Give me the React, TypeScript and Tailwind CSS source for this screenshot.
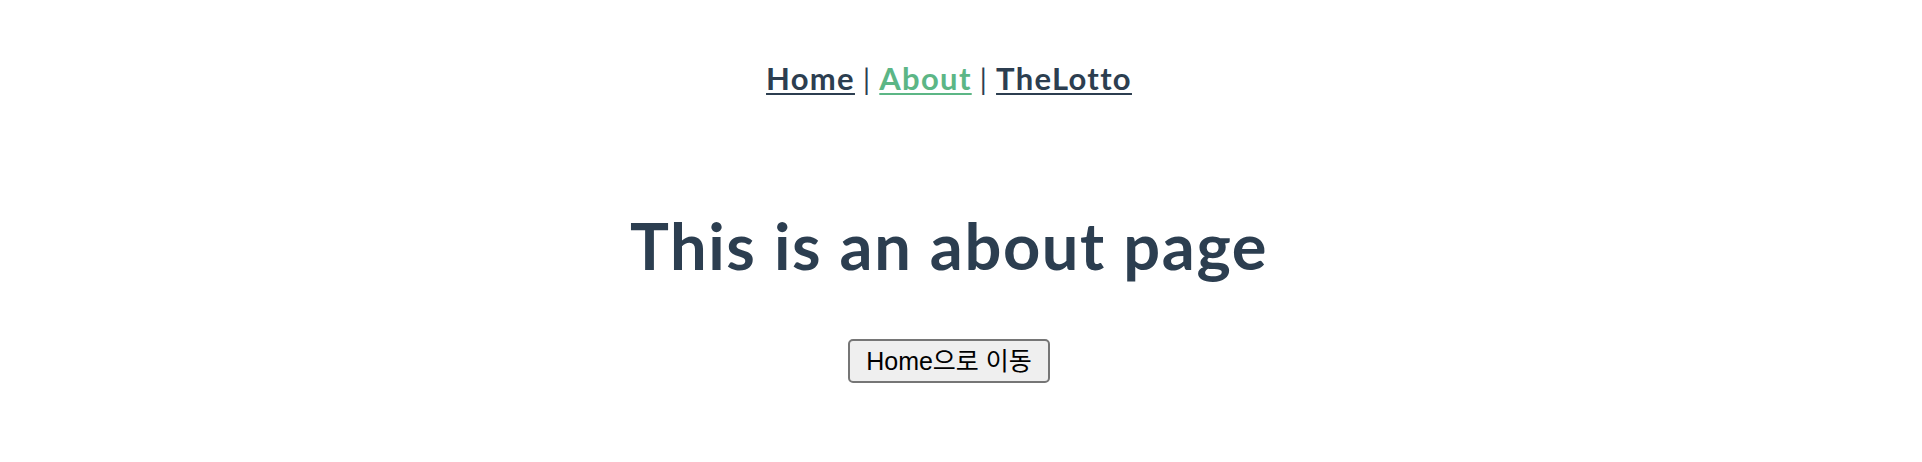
import React from 'react';

export default function App() {
  return (
    <div className="min-h-screen bg-white pr-[24px] text-center text-[#2c3e50] font-['Lato','Noto_Sans',sans-serif]">
      {/* Nav */}
      <nav className="pt-[58px] text-[31px] leading-[40px] font-bold tracking-[1.3px]">
        <a href="#" className="underline underline-offset-[3px] decoration-[2px]">Home</a>
        <span className="font-normal px-[8px] text-[28px]">|</span>
        <a href="#" className="underline underline-offset-[3px] decoration-[2px] text-[#5cb686]">About</a>
        <span className="font-normal px-[8px] text-[28px]">|</span>
        <a href="#" className="underline underline-offset-[3px] decoration-[2px]">TheLotto</a>
      </nav>

      <div className="pt-[106px] flex flex-col items-center">
        <h1 className="text-[65px] leading-[80px] font-bold tracking-[1.6px]">This is an about page</h1>
        <button className="mt-[54px] h-[44px] px-[16px] border-2 border-[#767676] rounded-[5px] bg-[#efefef] text-black text-[25px] leading-none font-['Liberation_Sans','Noto_Sans_CJK_KR',sans-serif]">
          Home으로 이동
        </button>
      </div>
    </div>
  );
}
